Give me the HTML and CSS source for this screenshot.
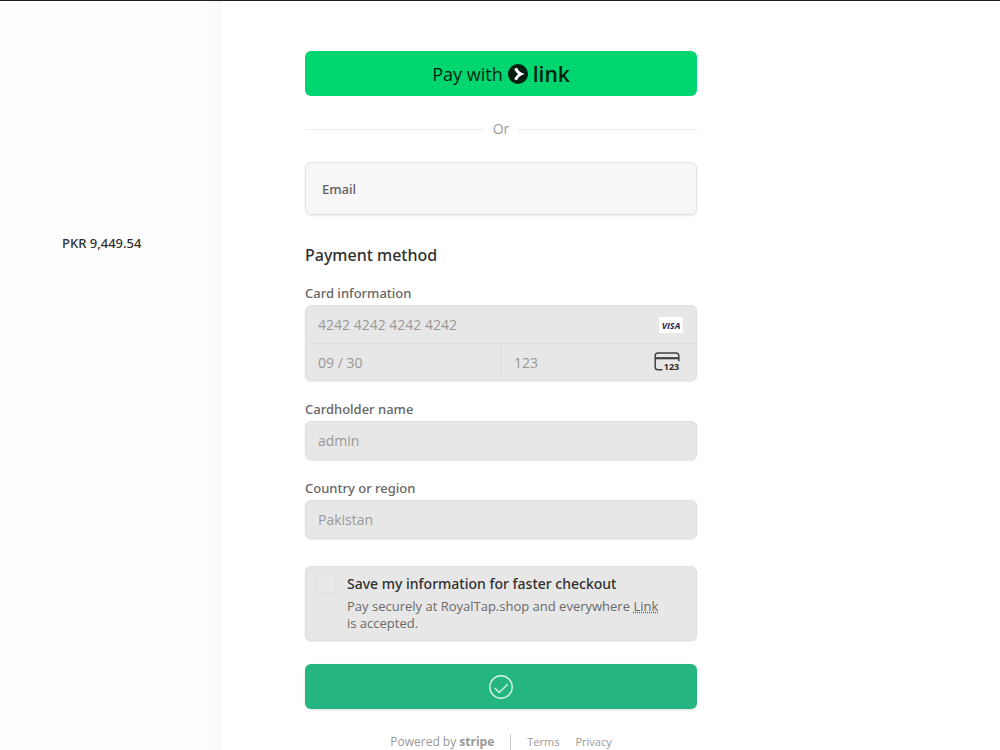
FILE: index.html
```
<!DOCTYPE html>
<html lang="en">
  <head>
    <meta charset="UTF-8" />
    <meta name="viewport" content="width=device-width, initial-scale=1.0" />
    <title>Checkout</title>
    <link rel="stylesheet" href="styles.css">
  </head>
  <body>
    <div class="checkout">
      <aside class="summary">
        <p class="amount">PKR 9,449.54</p>
      </aside>

      <main class="payment">
        <form class="form">
          <button type="button" class="btn btn-link">
            <span>Pay with</span>
            <svg class="link-icon" viewBox="0 0 20 20" aria-hidden="true">
              <circle cx="10" cy="10" r="10" fill="#011e0f" />
              <path d="M7.600 4.300c.9 2.400 2.700 4.500 5.400 5.700-2.700 1.200-4.500 3.300-5.400 5.700" fill="none" stroke="#fff" stroke-width="3" />
            </svg>
            <span class="link-word">link</span>
          </button>

          <div class="divider">Or</div>

          <div class="email-box">
            <label for="email">Email</label>
            <input type="email" id="email" />
          </div>

          <h2 class="heading">Payment method</h2>

          <fieldset class="field">
            <legend class="label">Card information</legend>
            <div class="card-box">
              <div class="card-row">
                <input class="input" type="text" value="4242 4242 4242 4242" aria-label="Card number" disabled />
                <svg class="visa" viewBox="0 0 24 16" aria-label="Visa">
                  <rect width="24" height="16" rx="1" fill="#fff" />
                  <text x="12" y="11.500" text-anchor="middle">VISA</text>
                </svg>
              </div>
              <div class="card-row card-split">
                <input class="input" type="text" value="09 / 30" aria-label="Expiration" disabled />
                <div class="cvc">
                  <input class="input" type="text" value="123" aria-label="CVC" disabled />
                  <svg class="cvc-icon" viewBox="0 0 26 22" aria-hidden="true">
                    <path d="M8.500 18.800H4A2.800 2.800 0 0 1 1.200 16V4.800A2.800 2.800 0 0 1 4 2h18A2.800 2.800 0 0 1 24.800 4.800v5.500" fill="none" stroke="#414141" stroke-width="1.500" />
                    <path d="M1 7.200h24" stroke="#414141" stroke-width="2.200" />
                    <text x="17.500" y="19" text-anchor="middle">123</text>
                  </svg>
                </div>
              </div>
            </div>
          </fieldset>

          <div class="field">
            <label class="label" for="name">Cardholder name</label>
            <input class="input input-box" type="text" id="name" value="admin" disabled />
          </div>

          <div class="field">
            <label class="label" for="country">Country or region</label>
            <select class="input input-box" id="country" disabled>
              <option>Pakistan</option>
            </select>
          </div>

          <div class="save-box">
            <input type="checkbox" id="save" class="checkbox" disabled />
            <div>
              <label class="save-title" for="save">Save my information for faster checkout</label>
              <p class="save-text">Pay securely at RoyalTap.shop and everywhere <a href="#">Link</a> is accepted.</p>
            </div>
          </div>

          <button type="submit" class="btn btn-submit" aria-label="Payment complete">
            <svg class="check-icon" viewBox="0 0 24 24" fill="none" stroke="#d5f3e6" stroke-width="1.400" stroke-linecap="round" stroke-linejoin="round">
              <circle cx="12" cy="12" r="11.200" />
              <path d="M6 13.200l4.200 4.200 8.200-7.800" />
            </svg>
          </button>
        </form>

        <footer class="footer">
          <span class="powered">Powered by <b>stripe</b></span>
          <a href="#">Terms</a>
          <a href="#">Privacy</a>
        </footer>
      </main>
    </div>
  </body>
</html>
```
FILE: styles.css
```
* {
  margin: 0;
  padding: 0;
  box-sizing: border-box;
}

body {
  font-family: 'Open Sans', 'Noto Sans', sans-serif;
  font-size: 13px;
  color: #303030;
  background: #fff;
}

.checkout {
  display: grid;
  grid-template-columns: 222px 1fr;
  border-top: 1px solid #202020;
}

.summary {
  padding: 232px 16px 0 62px;
  background: linear-gradient(to left, #f9f9f9, #fefefe 18px);
}

/* Open Sans has no medium weight */
.amount,
.email-box,
.heading,
.label,
.save-title {
  font-family: 'Noto Sans', sans-serif;
  font-weight: 500;
}

.amount {
  font-size: 13px;
  line-height: 20px;
  white-space: nowrap;
}

.payment {
  padding: 50px 83px 0;
}

.form,
.footer {
  max-width: 392px;
}

.btn {
  display: flex;
  align-items: center;
  justify-content: center;
  width: 100%;
  height: 45px;
  border: none;
  border-radius: 6px;
  font-family: inherit;
  cursor: pointer;
}

.btn-link {
  gap: 5px;
  background: #00d66f;
  color: #011e0f;
  font-size: 18px;
}

.link-icon {
  width: 20px;
  height: 20px;
}

.link-word {
  font-size: 21px;
  line-height: 24px;
  font-weight: 600;
}

.divider {
  display: flex;
  align-items: center;
  gap: 9px;
  margin: 23px 0;
  font-size: 14px;
  line-height: 20px;
  color: #999;
}

.divider::before,
.divider::after {
  content: '';
  flex: 1;
  height: 1px;
  background: #ebebeb;
}

.email-box {
  display: flex;
  align-items: center;
  height: 53px;
  padding: 0 16px;
  border: 1px solid #e2e2e2;
  border-radius: 6px;
  background: #f7f7f7;
  box-shadow: 0 1px 2px rgba(0, 0, 0, 0.08);
  color: #606060;
}

.email-box input {
  flex: 1;
  min-width: 0;
  margin-left: 12px;
  border: none;
  background: none;
  outline: none;
  font: inherit;
}

.heading {
  margin: 28px 0 16px;
  font-size: 16px;
  line-height: 24px;
}

.field {
  margin-bottom: 18px;
  border: none;
}

.label {
  display: block;
  margin-bottom: 2px;
  font-size: 13px;
  line-height: 20px;
  color: #666;
}

.card-box,
.input-box,
.save-box {
  border: 1px solid #dfdfdf;
  border-radius: 6px;
  background: #e7e7e7;
  box-shadow: 0 1px 2px rgba(0, 0, 0, 0.08);
}

.input {
  width: 100%;
  min-width: 0;
  height: 37px;
  padding: 0 12px;
  border: none;
  background: none;
  appearance: none;
  font-family: inherit;
  font-size: 14px;
  color: #999;
  opacity: 1;
}

.input-box {
  display: block;
  height: 39px;
  border: 1px solid #dfdfdf;
  background: #e7e7e7;
}

.card-row {
  display: flex;
  align-items: center;
}

.card-split {
  display: grid;
  grid-template-columns: 1fr 1fr;
  border-top: 1px solid #dfdfdf;
}

.card-split .input {
  height: 36px;
}

.cvc {
  display: flex;
  align-items: center;
  border-left: 1px solid #dfdfdf;
}

.visa {
  flex: none;
  width: 24px;
  height: 16px;
  margin-right: 13px;
}

.visa text {
  font: italic 700 9px 'Open Sans', sans-serif;
  fill: #25285c;
}

.cvc-icon {
  flex: none;
  width: 26px;
  height: 22px;
  margin-right: 16px;
}

.cvc-icon text {
  font: bold 9px 'Noto Sans', sans-serif;
  fill: #303030;
}

.save-box {
  display: flex;
  gap: 11px;
  margin: 27px 0 23px;
  padding: 7px 32px 8px 11px;
}

.checkbox {
  flex: none;
  width: 19px;
  height: 19px;
  border: 1px solid #e1e1e1;
  border-radius: 3px;
  background: #e9e9e9;
  appearance: none;
}

.save-title {
  display: block;
  font-size: 14px;
  line-height: 20px;
}

.save-text {
  margin-top: 4px;
  font-size: 13px;
  line-height: 17px;
  color: #6a6a6a;
}

.save-text a {
  color: inherit;
  text-decoration: underline dotted;
}

.btn-submit {
  background: #25b580;
  box-shadow: 0 1px 3px rgba(0, 0, 0, 0.12);
}

.check-icon {
  width: 24px;
  height: 24px;
}

.footer {
  display: flex;
  align-items: center;
  justify-content: center;
  gap: 16px;
  margin-top: 25px;
  font-size: 11px;
  line-height: 16px;
  color: #999;
}

.footer a {
  color: inherit;
  text-decoration: none;
}

.powered {
  padding-right: 16px;
  border-right: 1px solid #ccc;
  font-size: 12px;
}
```
